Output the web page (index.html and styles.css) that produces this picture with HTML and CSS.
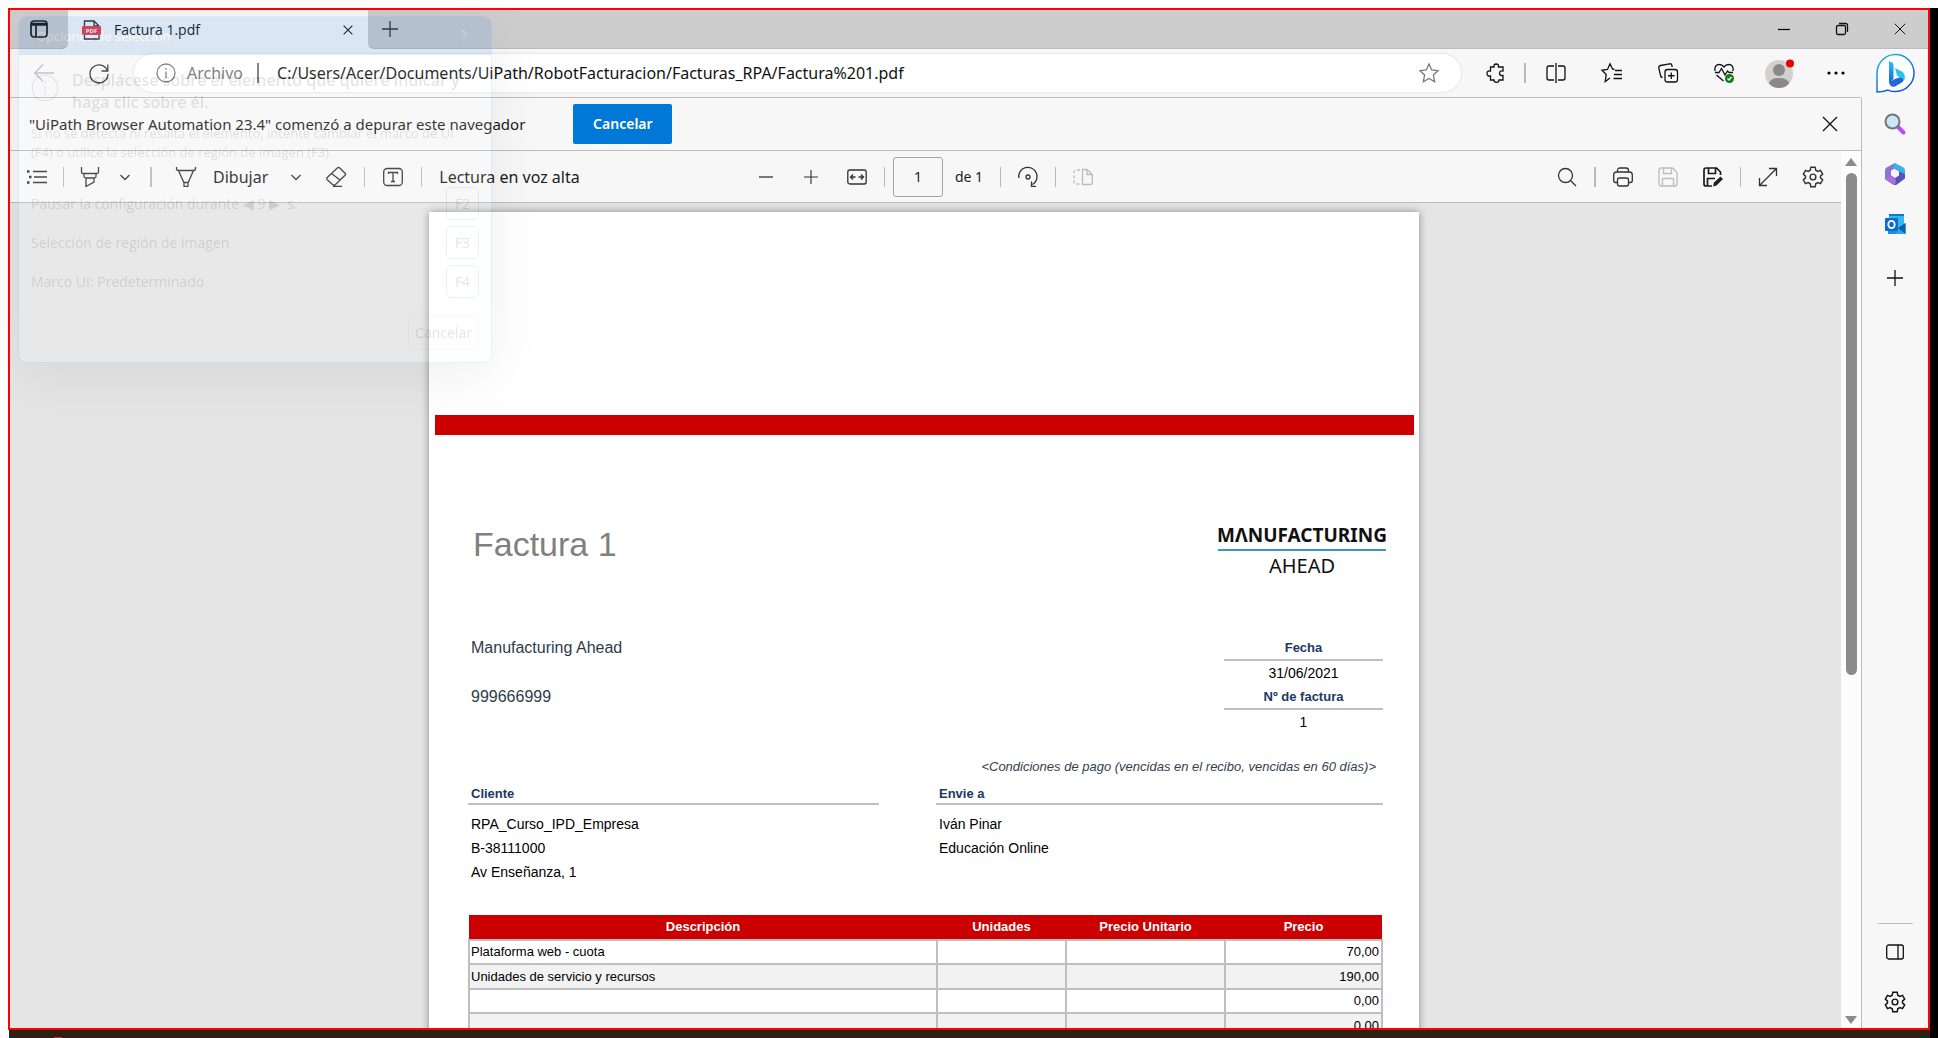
FILE: index.html
```html
<!DOCTYPE html>
<html lang="es">
<head>
<meta charset="utf-8">
<meta name="viewport" content="width=device-width, initial-scale=1">
<title>Factura 1.pdf</title>
<link rel="stylesheet" href="styles.css">
</head>
<body>
<svg class="defs" aria-hidden="true">
  <symbol id="chev" viewBox="0 0 12 12"><path d="M1.500 4 6 8.500 10.500 4"/></symbol>
  <symbol id="cross" viewBox="0 0 16 16"><path d="M1 1 15 15M15 1 1 15"/></symbol>
  <symbol id="plus" viewBox="0 0 16 16"><path d="M8 0V16M0 8H16"/></symbol>
  <symbol id="gear" viewBox="0 0 20 20"><circle cx="10" cy="10" r="2.600"/><path d="M8 1.200 7.500 3.800 5.600 4.900 3.200 4 1.200 7.400 3.200 9.200V10.800L1.200 12.600 3.200 16 5.600 15.100 7.500 16.200 8 18.800H12L12.500 16.200 14.400 15.100 16.800 16 18.800 12.600 16.800 10.800V9.200L18.800 7.400 16.800 4 14.400 4.900 12.500 3.800 12 1.200Z"/></symbol>
</svg>
<div class="frame">
  <header class="tabs">
    <div class="strip strip-left"><button class="btn" aria-label="Espacios"><svg class="ic i18 bold" viewBox="0 0 18 18"><rect x="1" y="1" width="16" height="16" rx="3"/><path d="M1 3.500H17M1 5H17M6 5V17"/></svg></button></div>
    <div class="tab">
      <svg class="ic i20" viewBox="0 0 20 20"><path d="M2.500 7V1H12L17 6V19H2.500V14M12 1V6H17"/><rect x="0" y="6" width="19" height="9" rx="1" fill="#e8414d" stroke="none"/><text x="9.500" y="13" class="pdf">PDF</text></svg>
      <span class="tab-title">Factura 1.pdf</span>
      <button class="btn" aria-label="Cerrar pestaña"><svg class="ic i10 bold"><use href="#cross"/></svg></button>
    </div>
    <div class="strip strip-right">
      <button class="btn" aria-label="Nueva pestaña"><svg class="ic i16"><use href="#plus"/></svg></button>
      <div class="window-controls">
        <button class="btn" aria-label="Minimizar"><svg class="ic i12 ink" viewBox="0 0 12 12"><path d="M0 6.500H12"/></svg></button>
        <button class="btn" aria-label="Restaurar"><svg class="ic i12 ink" viewBox="0 0 12 12"><rect x=".5" y="2.500" width="9" height="9" rx="1.500"/><path d="M3 .5H9.500Q11.500 .5 11.500 2.500V9"/></svg></button>
        <button class="btn" aria-label="Cerrar"><svg class="ic i12 ink"><use href="#cross"/></svg></button>
      </div>
    </div>
  </header>

  <div class="nav">
    <div class="nav-main">
      <button class="btn faint" aria-label="Atrás"><svg class="ic i20" viewBox="0 0 20 20"><path d="M20 10H1M9 1.500 .8 10 9 18.500"/></svg></button>
      <button class="btn reload" aria-label="Actualizar"><svg class="ic i20" viewBox="0 0 20 20"><path d="M18.500 8A9 9 0 1 0 19 11M18.800 1.500V8H12.500"/></svg></button>
      <div class="address">
        <svg class="ic i20 grey" viewBox="0 0 20 20"><circle cx="10" cy="10" r="9"/><path d="M10 8.500V15M10 5V6.800"/></svg>
        <span class="scheme">Archivo</span><i class="bar"></i>
        <input class="url" aria-label="Dirección" value="C:/Users/Acer/Documents/UiPath/RobotFacturacion/Facturas_RPA/Factura%201.pdf">
        <button class="btn" aria-label="Añadir a favoritos"><svg class="ic i20 grey" viewBox="0 0 20 20"><path d="M10 1 12.700 7 19 7.700 14.400 12 15.700 18.800 10 15.500 4.300 18.800 5.600 12 1 7.700 7.300 7Z"/></svg></button>
      </div>
      <div class="extensions">
        <button class="btn" aria-label="Extensiones"><svg class="ic i20 ink" viewBox="0 0 20 20"><path d="M5 4H8Q7.500 1 10.200 1T12.500 4H17V8Q13.500 7.500 13.500 10.200T17 12.500V17H13Q13 19.300 10.500 19.300T8 17H4.500V13Q1 13.500 1 10.500T4.500 8V4Z"/></svg></button>
        <i class="sep thick"></i>
      </div>
      <div class="actions">
        <button class="btn" aria-label="Dividir pantalla"><svg class="ic i20 ink" viewBox="0 0 20 20"><path d="M8 3H3Q1 3 1 5V15Q1 17 3 17H8M12 3H17Q19 3 19 5V15Q19 17 17 17H12M10 0V20"/></svg></button>
        <button class="btn" aria-label="Favoritos"><svg class="ic i20 ink" viewBox="0 0 20 20"><path d="M12.500 6.500 10.500 6 8 .8 5.500 6.500 0 7.300 4.200 11.500 3.200 18.500 8 15M13 7.500H20M12 11.500H20M11.500 15.500H20"/></svg></button>
        <button class="btn" aria-label="Colecciones"><svg class="ic i20 ink" viewBox="0 0 20 20"><rect x="7" y="6.500" width="12.500" height="12.500" rx="2.500"/><path d="M13.250 9.500V16M10 12.750H16.500M14 4V2.500Q13.500 .5 11.500 .8L2.500 2.500Q.5 3 .8 5L2.500 12.500Q3 14.500 4.500 14.500"/></svg></button>
        <button class="btn" aria-label="Rendimiento"><svg class="ic i20 ink" viewBox="0 0 20 20"><path d="M1 8Q0 1.500 5.500 1.500 8 1.500 10 4 12 1.500 14.500 1.500 20 1.500 19 8M2.500 12 9.500 18M1 9.500H5L7.500 5.500 11 12 13.500 8 15 9.500H19"/><circle cx="15.500" cy="15.500" r="4.500" fill="#107c10" stroke="none"/><path d="m13.500 15.500 1.500 1.500 2.500-3" stroke="#fff"/></svg></button>
        <button class="btn avatar" aria-label="Perfil"><svg class="i32" viewBox="0 0 32 32"><circle cx="15" cy="17" r="14" fill="#d3d1cf"/><circle cx="15" cy="13" r="6" fill="#8b8987"/><path d="M5 26.500Q6 21 15 21T25 26.500Q21 31 15 31T5 26.500Z" fill="#8b8987"/><circle cx="26" cy="6.500" r="4" fill="#e60000"/></svg></button>
        <button class="btn" aria-label="Configuración y más"><svg class="i20" viewBox="0 0 20 20"><circle cx="3" cy="10" r="1.600"/><circle cx="10" cy="10" r="1.600"/><circle cx="17" cy="10" r="1.600"/></svg></button>
      </div>
    </div>
    <button class="btn bing" aria-label="Bing"><svg class="i40" viewBox="0 0 40 40"><defs><linearGradient id="g1" x1="0" y1="0" x2=".6" y2="1"><stop offset="0" stop-color="#1ac0f0"/><stop offset="1" stop-color="#1c4fd0"/></linearGradient><linearGradient id="g2" x1="0" y1="0" x2="0" y2="1"><stop offset="0" stop-color="#25c3f2"/><stop offset="1" stop-color="#1c5fe0"/></linearGradient></defs><path d="M2 38V19A18.500 18.500 0 1 1 21 37.500Q16 38 13 36 8 38 2 38Z" fill="#fff" stroke="url(#g1)" stroke-width="1.500"/><path d="M14 7 17 8.500Q18.500 9.300 18.500 11V25L14 29Z" fill="url(#g2)"/><path d="M14 28 20 25 27 22.500Q31 26 26 29L20 32.500Q15 34 14 28Z" fill="#2464dd"/><path d="M20 14 27 17.500Q31 20.500 29.500 26L22 21.500Z" fill="#27c4ee"/></svg></button>
  </div>

  <div class="middle">
    <div class="column">
      <div class="infobar">
        <span>"UiPath Browser Automation 23.4" comenzó a depurar este navegador</span>
        <button class="primary">Cancelar</button>
        <button class="btn dismiss" aria-label="Cerrar aviso"><svg class="ic i16 ink"><use href="#cross"/></svg></button>
      </div>
      <div class="viewer">
        <div class="viewer-main">
          <div class="toolbar">
            <div class="tools">
              <button class="btn" aria-label="Contenido"><svg class="ic i20" viewBox="0 0 20 20"><path d="M6 4.500H20M7 10H20M6 15.500H20"/><path d="M0 4.500H2.500M2 10H4.500M0 15.500H2.500" stroke-width="2.500"/></svg></button>
              <i class="sep"></i>
              <button class="btn" aria-label="Resaltar"><svg class="ic i20" viewBox="0 0 20 20"><path d="M1.500 0V5Q1.500 6.500 3 6.500H17Q18.500 6.500 18.500 5V0M4 6.500V9.500Q4 11 6 11H14Q16 11 16 9.500V6.500M6 11V19.500L14 15V11"/></svg></button>
              <button class="btn chev" aria-label="Opciones de resaltado"><svg class="ic i12"><use href="#chev"/></svg></button>
              <i class="sep thick"></i>
              <button class="btn draw" aria-label="Lápiz"><svg class="ic i20" viewBox="0 0 20 20"><path d="M.5 0V1.500Q.5 3.500 2.500 3.500H17.500Q19.500 3.500 19.500 1.500V0M2.500 3.500 8 16V19.300H12V16L17.500 3.500M8 15.500H12"/></svg></button>
              <button class="btn label">Dibujar</button>
              <button class="btn chev" aria-label="Opciones de dibujo"><svg class="ic i12"><use href="#chev"/></svg></button>
              <button class="btn erase" aria-label="Borrar"><svg class="ic i20" viewBox="0 0 20 20"><path d="M13.500 .8 19.300 6.500Q20 7.300 19.300 8L9.500 17.500Q8 18.800 6.500 17.500L1 12.500Q.3 11.500 1 10.800L11.500 .8Q12.500 .2 13.500 .8ZM5.500 6.500 14 13M7 19.300H16"/></svg></button>
              <i class="sep"></i>
              <button class="btn text-tool" aria-label="Texto"><svg class="ic i20" viewBox="0 0 20 20"><rect x=".7" y="1.500" width="18.600" height="17" rx="3.500"/><path d="M5.500 7V5.500H14.500V7M10 5.500V14.500M8 14.500H12"/></svg></button>
              <i class="sep"></i>
              <button class="btn label">Lectura en voz alta</button>
            </div>
            <div class="tools center">
              <button class="btn" aria-label="Alejar"><svg class="ic i14 soft" viewBox="0 0 14 14"><path d="M0 7H14" stroke-width="2"/></svg></button>
              <button class="btn zoom-in" aria-label="Acercar"><svg class="ic i14"><use href="#plus"/></svg></button>
              <button class="btn" aria-label="Ajustar al ancho"><svg class="ic i20" viewBox="0 0 20 20"><rect x=".8" y="3" width="18.400" height="14" rx="2"/><path d="M8.500 10H4M6 7.500 3.500 10 6 12.500M11.500 10H16M14 7.500 16.500 10 14 12.500"/></svg></button>
              <i class="sep"></i>
              <div class="pager"><input id="page" class="page-input" value="1"><label for="page">de 1</label></div>
              <i class="sep"></i>
              <button class="btn" aria-label="Girar"><svg class="ic i20" viewBox="0 0 20 20"><path d="M.8 11A9.200 9.200 0 1 1 14.500 17.500M18 19.300H13.500V14.500"/><circle cx="10" cy="10" r="2"/></svg></button>
              <i class="sep"></i>
              <button class="btn faint" aria-label="Vista de página"><svg class="ic i20" viewBox="0 0 20 20"><path d="M7 3H3Q1 3 1 5V15Q1 17 3 17H7" stroke-dasharray="3 2"/><path d="M9.500 2.500H14L19.300 7.500V15.500Q19.300 17.500 17.300 17.500H9.500ZM14 2.500V7.500H19.300"/></svg></button>
            </div>
            <div class="tools right">
              <button class="btn" aria-label="Buscar"><svg class="ic i20" viewBox="0 0 20 20"><circle cx="8.500" cy="8.500" r="7"/><path d="M13.500 13.500 19 19"/></svg></button>
              <i class="sep thick"></i>
              <button class="btn" aria-label="Imprimir"><svg class="ic i20" viewBox="0 0 20 20"><path d="M4.500 5V3.500Q4.500 1 7 1H13Q15.500 1 15.500 3.500V5M4.500 15.500H2.500Q.7 15.500 .7 13.500V8Q.7 5 3.500 5H16.500Q19.300 5 19.300 8V13.500Q19.300 15.500 17.500 15.500H15.500"/><rect x="4.500" y="11" width="11" height="8" rx="2"/></svg></button>
              <button class="btn faint save" aria-label="Guardar"><svg class="ic i20" viewBox="0 0 20 20"><path d="M3.500 1H14.500L19 5.500V17Q19 19 17 19H3Q1 19 1 17V3Q1 1 3.500 1ZM5.500 1V6.500H13.500V1M4.500 19V11.500H15.500V19"/></svg></button>
              <button class="btn save" aria-label="Guardar como"><svg class="ic i20 bold" viewBox="0 0 20 20"><path d="M9 19H3Q1 19 1 17V3Q1 1 3 1H13.500L17.500 5V8M5.500 1V6.500H12.500V1M4.500 19V11.500H12"/><path d="M10 19.500 11 15.500 17.500 9.500 20 12 13.500 18.500Z" fill="#222" stroke="none"/></svg></button>
              <i class="sep"></i>
              <button class="btn" aria-label="Pantalla completa"><svg class="ic i20" viewBox="0 0 20 20"><path d="M1.500 18.500 18.500 1.500M11 1.500H18.500V9M1.500 11V18.500H9"/></svg></button>
              <button class="btn config" aria-label="Configuración"><svg class="ic i22"><use href="#gear"/></svg></button>
            </div>
          </div>
          <main class="canvas">
            <article class="page">
              <div class="red-band"></div>
              <div class="sheet">
                <div class="sheet-head">
                  <h1>Factura 1</h1>
                  <div class="logo"><div class="logo-top">MΛNUFACTURING</div><div class="logo-bottom">AHEAD</div></div>
                </div>
                <div class="meta">
                  <div class="company"><p>Manufacturing Ahead</p><p>999666999</p></div>
                  <dl class="numbers"><dt>Fecha</dt><dd>31/06/2021</dd><dt>Nº de factura</dt><dd>1</dd></dl>
                </div>
                <p class="terms">&lt;Condiciones de pago (vencidas en el recibo, vencidas en 60 días)&gt;</p>
                <div class="parties">
                  <section><h2>Cliente</h2><p>RPA_Curso_IPD_Empresa</p><p>B-38111000</p><p>Av Enseñanza, 1</p></section>
                  <section><h2>Envie a</h2><p>Iván Pinar</p><p>Educación Online</p></section>
                </div>
                <table class="items">
                  <colgroup><col class="c-desc"><col class="c-units"><col class="c-unit-price"><col></colgroup>
                  <thead><tr><th>Descripción</th><th>Unidades</th><th>Precio Unitario</th><th>Precio</th></tr></thead>
                  <tbody>
                    <tr><td>Plataforma web - cuota</td><td></td><td></td><td>70,00</td></tr>
                    <tr><td>Unidades de servicio y recursos</td><td></td><td></td><td>190,00</td></tr>
                    <tr><td></td><td></td><td></td><td>0,00</td></tr>
                    <tr><td></td><td></td><td></td><td>0,00</td></tr>
                  </tbody>
                </table>
              </div>
            </article>
          </main>
        </div>
        <div class="scrollbar"><span class="arrow up"></span><span class="thumb"></span><span class="arrow down"></span></div>
      </div>
    </div>
    <aside class="sidebar">
      <button class="btn" aria-label="Buscar"><svg class="i22" viewBox="0 0 22 22"><path d="m14 14 5.500 5.500" stroke="#b84df0" stroke-width="4" stroke-linecap="round"/><circle cx="8.500" cy="8.500" r="7" fill="#c6e8fa" stroke="#777" stroke-width="2"/></svg></button>
      <button class="btn" aria-label="Microsoft 365"><svg class="i22" viewBox="0 0 22 22"><path d="M11 0 2.500 4.500Q1 5.500 1 7.500V16L7 13V7.500L14 4Z" fill="#8a74dc"/><path d="M11 0 19.500 4.500Q21 5.500 21 7.500V15L15 12.500V8.500L9 5Z" fill="#37b3ea"/><path d="M21 12V15.500L13 21.500Q11 22.500 9 21.500L1 16 7 12.500 11 15 15 12.500V8.500L21 11Z" fill="#5552b8"/><path d="M1 16 7 12.500 12 16.500 11 22Z" fill="#b46be0"/></svg></button>
      <button class="btn" aria-label="Outlook"><svg class="i22" viewBox="0 0 22 22"><rect x="5" y="1" width="15" height="19" fill="#35b8f1"/><rect x="5" y="1" width="15" height="2" fill="#1279c9"/><path d="M14 15 21.500 10V21H4V17Z" fill="#1a8fe0"/><path d="M14 15 21.500 10V21Z" fill="#0f5fb0"/><path d="M14 15 21.500 21H12Z" fill="#28a5ee"/><rect x="1" y="5" width="13" height="13" rx="1" fill="#0a6cce"/><ellipse cx="7.500" cy="11.500" rx="3.200" ry="3.600" fill="none" stroke="#fff" stroke-width="1.800"/></svg></button>
      <button class="btn add" aria-label="Añadir"><svg class="ic i16 ink"><use href="#plus"/></svg></button>
      <div class="side-bottom">
        <button class="btn" aria-label="Barra lateral"><svg class="ic i18 ink" viewBox="0 0 18 18"><rect x=".7" y="2" width="16.600" height="14" rx="2"/><path d="M12 2V16"/></svg></button>
        <button class="btn" aria-label="Ajustes"><svg class="ic i22 ink"><use href="#gear"/></svg></button>
      </div>
    </aside>
  </div>
</div>
<div class="edge"></div>
<div class="taskbar"><i></i></div>

<div class="picker">
  <div class="picker-head"><span>Opciones de selección</span><span>?</span></div>
  <div class="picker-body">
    <div class="hint"><svg class="i28" viewBox="0 0 28 28"><circle cx="14" cy="14" r="12.800"/><path d="M14 12V21M14 7V9.500"/></svg><strong>Desplácese sobre el elemento que quiere indicar y haga clic sobre él.</strong></div>
    <p>Si no se detecta ni resalta el elemento, intente cambiar el marco de UI (F4) o utilice la selección de región de imagen (F3).</p>
    <div class="keys">
      <div><span>Pausar la configuración durante ◀ 9 ▶ &nbsp;s.</span><kbd>F2</kbd></div>
      <div><span>Selección de región de imagen</span><kbd>F3</kbd></div>
      <div><span>Marco UI: Predeterminado</span><kbd>F4</kbd></div>
    </div>
    <div class="picker-foot"><button>Cancelar</button></div>
  </div>
</div>
</body>
</html>
```
FILE: styles.css
```css
* { box-sizing: border-box; }
body {
  margin: 0; height: 100vh; overflow: hidden; background: #fff; color: #1b1b1b;
  display: grid; grid-template: 8px minmax(0, 1fr) 8px / 8px minmax(0, 1fr) 8px;
  font: 15px/20px "Noto Sans", "Open Sans", sans-serif;
}
p, h1, h2, dl, dd { margin: 0; }
button, input { font: inherit; color: inherit; }
.defs { display: none; }
.btn { border: 0; background: none; padding: 0; display: flex; flex: none; align-items: center; justify-content: center; }
svg { display: block; overflow: visible; }
.ic { fill: none; stroke: #333; stroke-width: 1.3; }
.ink { stroke: #111; }
.bold { stroke-width: 1.7; stroke: #1b1b1b; }
.grey { stroke: #777; }
.soft { stroke: #777; }
.faint .ic { stroke: #bcbcbc; }
.i10 { width: 10px; height: 10px; }
.i12 { width: 12px; height: 12px; }
.i14 { width: 14px; height: 14px; }
.i16 { width: 16px; height: 16px; }
.i18 { width: 18px; height: 18px; }
.i20 { width: 20px; height: 20px; }
.i22 { width: 22px; height: 22px; }
.i28 { width: 28px; height: 28px; }
.i32 { width: 32px; height: 32px; }
.i40 { width: 40px; height: 40px; }
.pdf { font: 700 6px "Open Sans", sans-serif; fill: #fff; stroke: none; text-anchor: middle; }

.frame { grid-area: 2 / 2; border: 2px solid #f00; background: #f7f7f7; display: flex; flex-direction: column; min-height: 0; }
.edge { grid-area: 2 / 3 / 4 / 4; background: #000; }
.taskbar { grid-area: 3 / 2; background: #2c2113; margin-left: 1px; padding: 7px 0 0 45px; }
.taskbar i { display: block; width: 8px; height: 1px; background: #b4372c; }

.tabs { display: flex; height: 39px; flex: none; }
.strip { background: #cdcdcd; border-bottom: 1px solid #bcbcbc; display: flex; align-items: center; }
.strip-left { width: 58px; padding-left: 20px; border-bottom-right-radius: 6px; }
.strip-right { flex: 1; padding: 0 22px 0 14px; justify-content: space-between; border-bottom-left-radius: 6px; }
.window-controls { display: flex; gap: 46px; }
.tab { width: 300px; display: flex; align-items: center; padding: 0 15px 0 14px; border-radius: 6px 6px 0 0; }
.tab-title { flex: 1; margin-left: 12px; font: 14px/20px "Open Sans", sans-serif; }

.nav { display: flex; height: 49px; flex: none; }
.nav-main { flex: 1; min-width: 0; display: flex; align-items: center; padding: 0 15px 0 24px; border-bottom: 1px solid #bcbcbc; }
.reload { margin: 0 25px 0 35px; }
.address { flex: 1; min-width: 0; height: 38px; border-radius: 19px; background: #fff; box-shadow: 0 0 3px #0002; display: flex; align-items: center; padding: 0 22px; font-size: 16px; }
.scheme { margin-left: 11px; color: #717171; }
.bar { width: 2px; height: 20px; background: #767676; margin: 0 18px 0 14px; }
.url { flex: 1; min-width: 0; border: 0; padding: 0; outline: 0; background: none; color: #111; }
.extensions { display: flex; align-items: center; gap: 18px; margin: 0 20px 0 25px; }
.actions { display: flex; align-items: center; gap: 36px; }
.avatar { width: 20px; }
.bing { width: 67px; }
.sep { width: 1px; height: 20px; background: #b9b9b9; flex: none; }
.sep.thick { width: 2px; }

.middle { flex: 1; min-height: 0; display: flex; }
.column { flex: 1; min-width: 0; display: flex; flex-direction: column; }
.infobar { height: 53px; flex: none; display: flex; align-items: center; padding: 0 23px 0 19px; border-bottom: 1px solid #bcbcbc; }
.primary { width: 99px; height: 40px; margin-left: 48px; border: 0; border-radius: 2px; background: #0078d7; color: #fff; font: 600 14px/20px "Noto Sans", sans-serif; }
.dismiss { margin-left: auto; }
.viewer { flex: 1; min-height: 0; display: flex; }
.viewer-main { flex: 1; min-width: 0; display: flex; flex-direction: column; }
.toolbar { height: 52px; flex: none; display: grid; grid-template-columns: 1fr auto 1fr; align-items: center; border-bottom: 1px solid #bcbcbc; }
.tools { display: flex; align-items: center; gap: 16px; padding-left: 17px; }
.chev { margin: 0 3px; }
.draw { margin-left: 8px; }
.label { font-size: 16px; white-space: nowrap; padding: 0 3px 0 1px; }
.erase { margin: 0 2px 0 5px; }
.text-tool { margin: 0 2px; }
.center { padding: 0 0 0 1px; gap: 17px; }
.zoom-in { margin: 0 12px 0 14px; }
.pager { display: flex; align-items: center; gap: 12px; margin-left: -9px; }
.page-input { width: 50px; height: 40px; border: 1px solid #a5a5a5; border-radius: 3px; background: #f7f7f7; text-align: center; font: 14px/20px "Noto Sans", sans-serif; }
.pager label { font-size: 14px; }
.right { justify-content: flex-end; padding-right: 17px; gap: 17px; }
.save { margin-left: 8px; }
.config { margin-left: 7px; }

.canvas { flex: 1; min-height: 0; overflow: hidden; background: #e5e5e5; padding: 9px 3px 0 0; }
.page { width: 990px; min-height: 100%; margin: 0 auto; padding: 203px 5px 0 6px; background: #fff; box-shadow: 0 0 8px #0006; font-family: "Liberation Sans", Arial, sans-serif; color: #000; }
.red-band { height: 20px; background: #c00; }
.sheet { padding: 89px 31px 0 33px; }
.sheet-head { display: flex; justify-content: space-between; align-items: flex-start; height: 111px; }
h1 { margin-left: 5px; font-size: 34px; line-height: 40px; font-weight: 400; color: #808080; }
.logo { width: 168px; margin-right: -3px; font-family: "Noto Sans", sans-serif; text-align: center; color: #111; }
.logo-top { font-size: 19px; line-height: 22px; font-weight: 700; border-bottom: 2px solid #3999c0; height: 27px; display: flex; justify-content: center; }
.logo-bottom { font-size: 20px; line-height: 30px; }
.meta { display: flex; justify-content: space-between; }
.company { padding-left: 3px; font-size: 16px; line-height: 25px; color: #2f3b4b; }
.company p + p { margin-top: 24px; }
.numbers { width: 159px; margin-top: 2px; text-align: center; font-size: 14px; line-height: 24px; }
.numbers dd { height: 25px; }
.numbers dt, h2 { font-size: 13px; line-height: 22px; font-weight: 700; color: #203864; border-bottom: 2px solid #bfbfbf; }
.terms { margin: 22px 7px 6px 0; text-align: right; font-size: 13px; line-height: 20px; font-style: italic; color: #333f4f; }
.parties { display: grid; grid-template-columns: 411px 1fr; gap: 57px; height: 132px; font-size: 14px; line-height: 24px; }
.parties h2 { height: 22px; margin-bottom: 7px; padding-left: 3px; line-height: 21px; }
.parties p { padding-left: 3px; }
.items { width: 100%; table-layout: fixed; border-collapse: collapse; font-size: 13px; line-height: 22px; }
.c-desc { width: 468px; }
.c-units { width: 129px; }
.c-unit-price { width: 159px; }
th { background: #c00; color: #fff; height: 25px; padding: 0; }
td { border: 2px solid #bfbfbf; height: 24px; padding: 0 2px 0 1px; }
td:last-child { text-align: right; }
tbody tr:nth-child(even) { background: #f2f2f2; }
tbody tr:nth-child(even) td { height: 25px; }

.scrollbar { width: 20px; flex: none; background: #fcfcfc; display: flex; flex-direction: column; align-items: center; padding: 7px 0 4px; }
.arrow { border: 6px solid transparent; }
.up { border-top: 0; border-bottom: 8px solid #8b8b8b; }
.down { border-bottom: 0; border-top: 8px solid #8b8b8b; margin-top: auto; }
.thumb { width: 11px; height: 58%; margin-top: 7px; border-radius: 6px; background: #8b8b8b; }
.sidebar { width: 67px; flex: none; border-left: 1px solid #bcbcbc; display: flex; flex-direction: column; align-items: center; gap: 28px; padding: 15px 0; }
.add { margin-top: 7px; }
.side-bottom { margin-top: auto; border-top: 1px solid #bcbcbc; width: 35px; display: flex; flex-direction: column; align-items: center; gap: 30px; padding-top: 19px; }

.picker { position: absolute; left: 18px; top: 16px; width: 474px; opacity: .12; border: 1px solid #2d8cf0; border-radius: 9px; background: #fff; box-shadow: 0 14px 60px #0008; font: 14px/20px "Open Sans", sans-serif; color: #222; }
.picker-head { height: 38px; display: flex; justify-content: space-between; align-items: center; padding: 0 24px 0 17px; border-radius: 8px 8px 0 0; background: #0064d0; color: #fff; }
.picker-head span:first-child { font-size: 13px; }
.picker-body { padding: 14px 12px 12px; }
.hint { display: flex; gap: 13px; font-size: 16px; line-height: 22px; }
.hint strong { font-weight: 600; }
.hint svg { flex: none; fill: none; stroke: #2d8cf0; stroke-width: 1.6; margin-top: 5px; }
.picker p { margin: 11px 20px 25px 0; font-size: 13px; line-height: 19px; }
.keys { display: grid; gap: 6px; padding-bottom: 11px; border-bottom: 1px solid #ddd; }
.keys div { display: flex; justify-content: space-between; align-items: center; }
kbd { width: 33px; height: 33px; border: 1px solid #2d8cf0; border-radius: 5px; display: grid; place-items: center; font: inherit; }
.picker-foot { display: flex; justify-content: flex-end; padding-top: 6px; }
.picker-foot button { width: 71px; height: 34px; border: 1px solid #ccc; border-radius: 5px; background: #f5f5f5; padding: 0; }
```
